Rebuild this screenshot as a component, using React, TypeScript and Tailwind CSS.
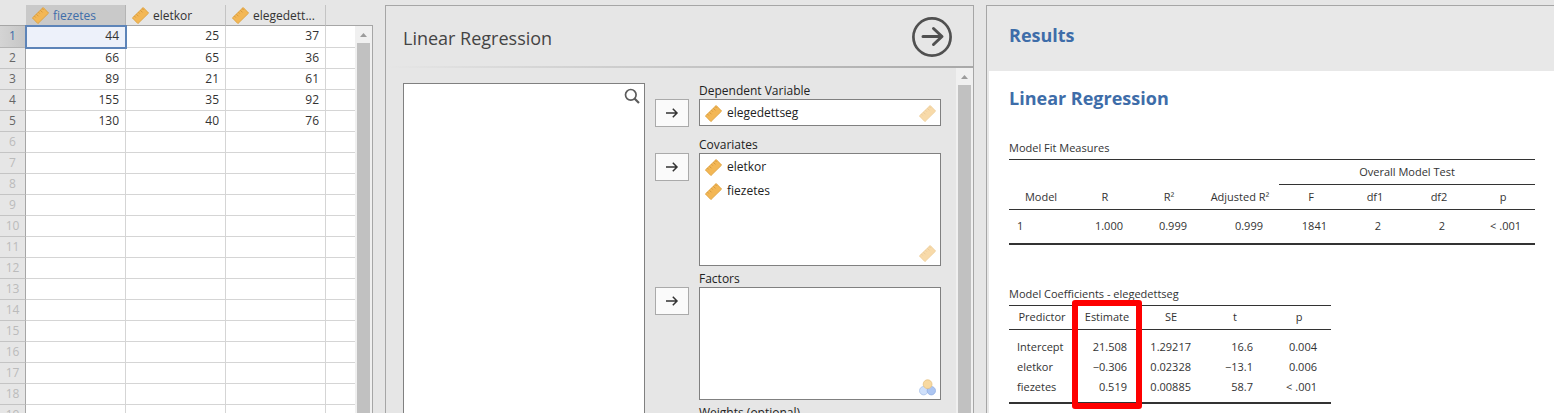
import React from "react";

const variables = ["fiezetes", "eletkor", "elegedett..."];
const data = [
  [44, 25, 37],
  [66, 65, 36],
  [89, 21, 61],
  [155, 35, 92],
  [130, 40, 76],
];
const rowNumbers = Array.from({ length: 19 }, (_, i) => i + 1);

function Ruler({ faded = false }: { faded?: boolean }) {
  return (
    <svg viewBox="0 0 17 17" className={faded ? "size-[17px] shrink-0 opacity-50" : "size-[17px] shrink-0"} aria-hidden="true">
      <path d="M11.200 0.5 16.600 6.100 5.900 16.600 0.400 10.900Z" fill="#f3b755" stroke="#dfa03a" strokeWidth="0.9" strokeLinejoin="round" />
      <path d="m2.500 9.200 1.300 1.300M4.500 7.300l2 2M6.500 5.300l1.300 1.300M8.500 3.400l2 2M10.300 1.700l1.300 1.300" stroke="#c98a30" strokeWidth="0.7" fill="none" />
    </svg>
  );
}

function Nominal() {
  return (
    <svg viewBox="0 0 17 17" className="size-[17px]" aria-hidden="true">
      <circle cx="4.7" cy="11.7" r="4.2" fill="#cfe0fa" stroke="#a9c2e8" strokeWidth="0.8" />
      <circle cx="12.3" cy="11.7" r="4.2" fill="#adc6f2" stroke="#94b1e4" strokeWidth="0.8" />
      <circle cx="8.6" cy="5.2" r="4.4" fill="#f8d9a0" stroke="#e4c184" strokeWidth="0.8" />
    </svg>
  );
}

function ScrollBar() {
  return (
    <div className="flex w-[17px] shrink-0 flex-col items-center bg-[#f0f0f0]" aria-hidden="true">
      <svg viewBox="0 0 17 17" className="size-[17px] shrink-0">
        <path d="M5 11h7L8.500 7Z" fill="#9c9c9c" />
      </svg>
      <div className="w-[13px] flex-1 bg-[#c1c1c1]" />
    </div>
  );
}

function Spreadsheet() {
  return (
    <section className="flex min-w-0 flex-col overflow-hidden" aria-label="Data">
      <div className="flex flex-1 items-stretch overflow-hidden">
        <div className="min-w-0 flex-1">
          <table className="w-full table-fixed border-separate border-spacing-0 text-xs leading-[19px]">
            <colgroup>
              <col className="w-[26px]" />
              <col className="w-[100px]" />
              <col className="w-[100px]" />
              <col className="w-[100px]" />
              <col />
            </colgroup>
            <thead>
              <tr className="h-[21px]">
                <td className="border-b border-[#a6a6a6] p-0" />
                {variables.map((name, i) => (
                  <th
                    key={name}
                    scope="col"
                    className={
                      i === 0
                        ? "border-r border-b border-r-[#b4b4b4] border-b-[#a6a6a6] bg-[#c9c9c9] p-0 text-left font-normal text-[#3e6da9]"
                        : "border-r border-b border-r-[#c4c4c4] border-b-[#a6a6a6] p-0 text-left font-normal text-[#333]"
                    }
                  >
                    <div className="flex items-center gap-1 pl-1.5 whitespace-nowrap">
                      <Ruler />
                      {name}
                    </div>
                  </th>
                ))}
                <td className="border-b border-[#a6a6a6] p-0" />
              </tr>
            </thead>
            <tbody>
              {rowNumbers.map((n, r) => {
                const row = data[r];
                return (
                  <tr key={n} className={r === 0 ? "h-[22px] align-top" : "h-[21px] align-top"}>
                    <th
                      scope="row"
                      className={
                        r === 0
                          ? "border-r border-b border-r-[#a6a6a6] border-b-[#b4b4b4] bg-linear-to-r from-[#d4d4d4] to-[#c6c6c6] p-0 text-center font-normal text-[#3e6da9]"
                          : row
                            ? "border-r border-b border-r-[#a6a6a6] border-b-[#c4c4c4] p-0 text-center font-normal text-[#666]"
                            : "border-r border-b border-r-[#a6a6a6] border-b-[#c4c4c4] p-0 text-center font-normal text-[#bbb]"
                      }
                    >
                      {n}
                    </th>
                    {[0, 1, 2].map((c) => (
                      <td
                        key={c}
                        className={
                          r === 0 && c === 0
                            ? "relative z-10 bg-[#edf1fa] py-0 pr-[7px] text-right text-[#333] outline-2 -outline-offset-1 outline-[#5d84b8]"
                            : "border-r border-b border-[#d5d5d5] bg-white py-0 pr-1.5 text-right text-[#333]"
                        }
                      >
                        {row ? row[c] : null}
                      </td>
                    ))}
                    <td className="border-b border-[#d5d5d5] bg-white p-0" />
                  </tr>
                );
              })}
            </tbody>
          </table>
        </div>
        <div className="mt-5 flex border-t border-r border-[#a6a6a6]">
          <ScrollBar />
        </div>
      </div>
    </section>
  );
}

function Target({
  label,
  items = [],
  tall = false,
  hint,
}: {
  label: string;
  items?: string[];
  tall?: boolean;
  hint: React.ReactNode;
}) {
  return (
    <div className="flex gap-2.5">
      <button
        type="button"
        aria-label={`Move to ${label}`}
        className="mt-4 flex h-7 w-[34px] shrink-0 items-center justify-center border border-[#aaa] bg-[#fafafa]"
      >
        <svg viewBox="0 0 14 12" className="h-3 w-3.5" fill="none" stroke="#333" strokeWidth="1.5">
          <path d="M1 6h11M7.800 1.800 12 6l-4.200 4.200" />
        </svg>
      </button>
      <div className="min-w-0 flex-1">
        <h2 className="h-4 text-xs leading-4 whitespace-nowrap text-[#222]">{label}</h2>
        <div
          className={
            tall
              ? "flex h-[113px] justify-between border border-[#808080] bg-white pr-1"
              : "flex h-[27px] justify-between border border-[#808080] bg-white pr-1"
          }
        >
          <ul className="pt-px pl-[5px] text-xs leading-6 text-[#222]">
            {items.map((v) => (
              <li key={v} className="flex h-6 items-center gap-[5px]">
                <Ruler />
                {v}
              </li>
            ))}
          </ul>
          <div className="self-end pb-[3px]">{hint}</div>
        </div>
      </div>
    </div>
  );
}

function Options() {
  return (
    <section className="flex min-w-0 flex-col overflow-hidden border-x border-t border-[#a6a6a6]">
      <header className="flex h-[60px] shrink-0 items-center justify-between pr-[21px] pl-[17px]">
        <h1 className="pt-1 text-lg text-[#444]">Linear Regression</h1>
        <button type="button" aria-label="Close options" className="mt-0.5 size-10">
          <svg viewBox="0 0 40 40" className="size-10" fill="none" stroke="#505050">
            <circle cx="20" cy="20" r="18.600" strokeWidth="2.700" />
            <path d="M11 19.500h18M21.500 11.500l8.500 8-8.500 8" strokeWidth="3" strokeLinecap="round" strokeLinejoin="round" />
          </svg>
        </button>
      </header>
      <div className="h-0.5 shrink-0 bg-linear-to-r from-[#e6e6e6] to-[#a8a8a8]" />
      <div className="flex min-h-0 flex-1">
        <div className="flex min-w-0 flex-1 gap-2.5 overflow-hidden pt-[15px] pr-[15px] pl-[17px]">
          <div className="flex min-w-0 flex-1 items-start justify-end border border-b-0 border-[#808080] bg-white p-1">
            <button type="button" aria-label="Search variables" className="size-4">
              <svg viewBox="0 0 16 16" className="size-4" fill="none" stroke="#5c5c5c">
                <circle cx="6.800" cy="6.800" r="5.300" strokeWidth="1.700" />
                <path d="m10.500 10.500 4.500 4.500" strokeWidth="2.200" />
              </svg>
            </button>
          </div>
          <div className="flex w-[286px] shrink-0 flex-col gap-[5px]">
            <div className="pb-[5px]">
              <Target label="Dependent Variable" items={["elegedettseg"]} hint={<Ruler faded />} />
            </div>
            <Target label="Covariates" items={["eletkor", "fiezetes"]} tall hint={<Ruler faded />} />
            <Target label="Factors" tall hint={<Nominal />} />
            <Target label="Weights (optional)" hint={<Ruler faded />} />
          </div>
        </div>
        <ScrollBar />
      </div>
    </section>
  );
}

function FitTable() {
  return (
    <table className="w-[526px] table-fixed border-collapse text-[11px] leading-4">
      <caption className="h-[19px] text-left leading-4">Model Fit Measures</caption>
      <colgroup>
        <col className="w-16" />
        <col className="w-16" />
        <col className="w-16" />
        <col className="w-[78px]" />
        <col className="w-16" />
        <col className="w-16" />
        <col className="w-16" />
        <col className="w-16" />
      </colgroup>
      <thead>
        <tr className="h-[25px] border-t border-[#333]">
          <td colSpan={4} className="p-0" />
          <th colSpan={4} scope="colgroup" className="border-b border-[#333] p-0 font-normal">
            Overall Model Test
          </th>
        </tr>
        <tr className="h-[25px] border-b border-[#333]">
          {["Model", "R", "R²", "Adjusted R²", "F", "df1", "df2", "p"].map((h) => (
            <th key={h} scope="col" className="p-0 font-normal whitespace-nowrap">
              {h}
            </th>
          ))}
        </tr>
      </thead>
      <tbody>
        <tr className="h-[34px] border-b-2 border-[#333] text-right">
          <td className="py-0 pl-2 text-left">1</td>
          <td className="py-0 pr-3.5">1.000</td>
          <td className="py-0 pr-3.5">0.999</td>
          <td className="py-0 pr-4">0.999</td>
          <td className="py-0 pr-4">1841</td>
          <td className="py-0 pr-[26px]">2</td>
          <td className="py-0 pr-[26px]">2</td>
          <td className="py-0 pr-3.5 whitespace-nowrap">&lt; .001</td>
        </tr>
      </tbody>
    </table>
  );
}

const coefficients = [
  ["Intercept", "21.508", "1.29217", "16.6", "0.004"],
  ["eletkor", "−0.306", "0.02328", "−13.1", "0.006"],
  ["fiezetes", "0.519", "0.00885", "58.7", "< .001"],
];

function CoefficientTable() {
  return (
    <div className="relative w-[322px]">
      <table className="w-full table-fixed border-collapse text-[11px] leading-4">
        <caption className="h-[19px] text-left leading-4">Model Coefficients - elegedettseg</caption>
        <colgroup>
          <col className="w-[66px]" />
          <col className="w-16" />
          <col className="w-16" />
          <col className="w-16" />
          <col className="w-16" />
        </colgroup>
        <thead>
          <tr className="h-6 border-y border-[#333]">
            {["Predictor", "Estimate", "SE", "t", "p"].map((h) => (
              <th key={h} scope="col" className="p-0 font-normal">
                {h}
              </th>
            ))}
          </tr>
        </thead>
        <tbody className="border-b-2 border-[#333]">
          <tr className="h-2">
            <td colSpan={5} className="p-0" />
          </tr>
          {coefficients.map(([name, estimate, se, t, p]) => (
            <tr key={name} className="h-5 text-right whitespace-nowrap">
              <th scope="row" className="py-0 pl-2 text-left font-normal">
                {name}
              </th>
              <td className="py-0 pr-3">{estimate}</td>
              <td className="py-0 pr-3">{se}</td>
              <td className="py-0 pr-3.5">{t}</td>
              <td className="py-0 pr-3.5">{p}</td>
            </tr>
          ))}
          <tr className="h-1.5">
            <td colSpan={5} className="p-0" />
          </tr>
        </tbody>
      </table>
      <div className="absolute top-3.5 -bottom-[5px] left-[63px] w-[70px] rounded-[3px] border-[6px] border-[#fe0000]" />
    </div>
  );
}

function Results() {
  return (
    <section className="flex min-w-0 flex-col overflow-hidden border-t border-l border-[#a6a6a6] bg-[#e8e8e8] pl-0.5 text-[#333]">
      <h1 className="h-[65px] shrink-0 pt-[17px] pl-5 text-lg leading-6 font-bold text-[#3e6da9]">Results</h1>
      <div className="flex-1 bg-white pt-[15px] pl-5">
        <h2 className="text-lg leading-6 font-bold text-[#3e6da9]">Linear Regression</h2>
        <div className="mt-[30px] flex flex-col gap-[41px]">
          <FitTable />
          <CoefficientTable />
        </div>
      </div>
    </section>
  );
}

export default function App() {
  return (
    <main className="grid h-screen grid-cols-[373fr_589fr_568fr] gap-x-3 overflow-hidden bg-[#e6e6e6] pt-[5px] font-['Open_Sans','Noto_Sans',sans-serif]">
      <Spreadsheet />
      <Options />
      <Results />
    </main>
  );
}
